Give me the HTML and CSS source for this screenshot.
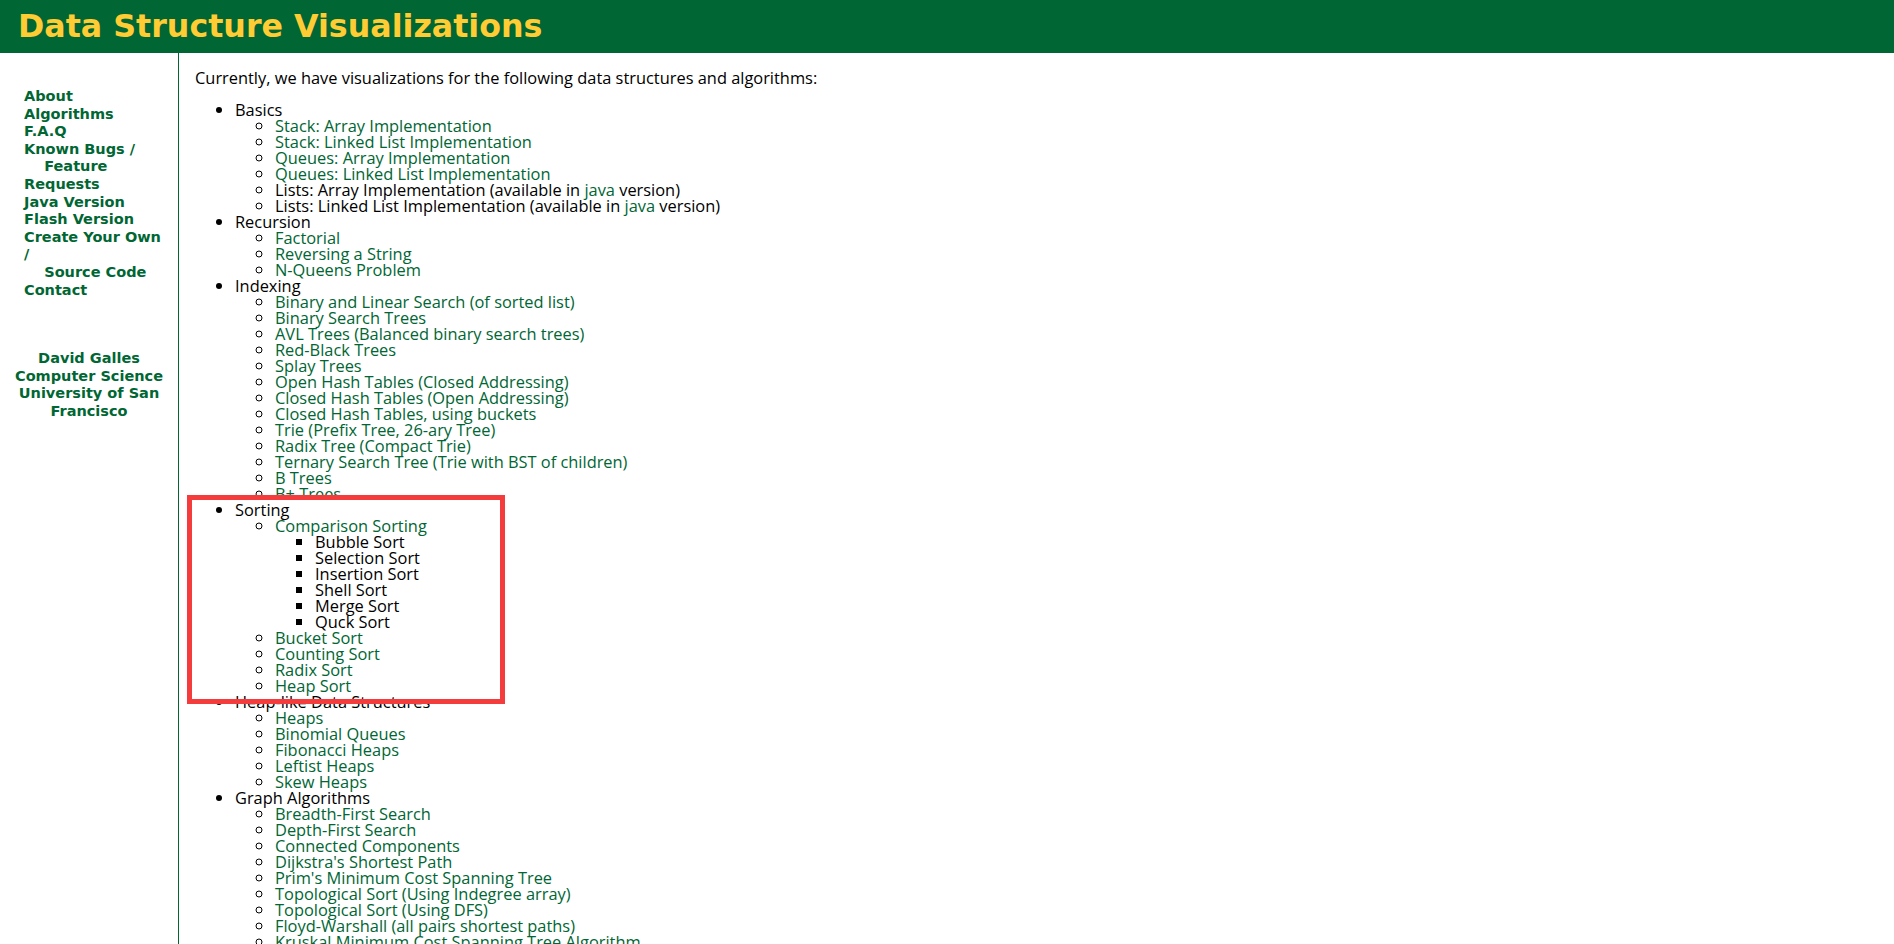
FILE: index.html
```html
<!DOCTYPE html>
<html>
<head>
    <title>Data Structure Visualizations</title>
    <link rel="stylesheet" href="styles.css">
</head>
<body>
    <div class="banner">
        <h1>Data Structure Visualizations</h1>
    </div>

    <div class="page">
        <div class="sidebar">
            <div class="nav-links">
                <a href="#">About</a><br>
                <a href="#">Algorithms</a><br>
                <a href="#">F.A.Q</a><br>
                <a href="#">Known Bugs /<br>&nbsp;&nbsp;&nbsp;&nbsp;Feature Requests</a><br>
                <a href="#">Java Version</a><br>
                <a href="#">Flash Version</a><br>
                <a href="#">Create Your Own /<br>&nbsp;&nbsp;&nbsp;&nbsp;Source Code</a><br>
                <a href="#">Contact</a>
            </div>
            <div class="author">
                <a href="#">David Galles</a><br>
                <a href="#">Computer Science</a><br>
                <a href="#">University of San Francisco</a>
            </div>
        </div>

        <div class="content">
            <p>Currently, we have visualizations for the following data structures and algorithms:</p>
            <ul class="topics">
                <li>Basics
                    <ul>
                        <li><a href="#">Stack: Array Implementation</a></li>
                        <li><a href="#">Stack: Linked List Implementation</a></li>
                        <li><a href="#">Queues: Array Implementation</a></li>
                        <li><a href="#">Queues: Linked List Implementation</a></li>
                        <li>Lists: Array Implementation (available in <a href="#">java</a> version)</li>
                        <li>Lists: Linked List Implementation (available in <a href="#">java</a> version)</li>
                    </ul>
                </li>
                <li>Recursion
                    <ul>
                        <li><a href="#">Factorial</a></li>
                        <li><a href="#">Reversing a String</a></li>
                        <li><a href="#">N-Queens Problem</a></li>
                    </ul>
                </li>
                <li>Indexing
                    <ul>
                        <li><a href="#">Binary and Linear Search (of sorted list)</a></li>
                        <li><a href="#">Binary Search Trees</a></li>
                        <li><a href="#">AVL Trees (Balanced binary search trees)</a></li>
                        <li><a href="#">Red-Black Trees</a></li>
                        <li><a href="#">Splay Trees</a></li>
                        <li><a href="#">Open Hash Tables (Closed Addressing)</a></li>
                        <li><a href="#">Closed Hash Tables (Open Addressing)</a></li>
                        <li><a href="#">Closed Hash Tables, using buckets</a></li>
                        <li><a href="#">Trie (Prefix Tree, 26-ary Tree)</a></li>
                        <li><a href="#">Radix Tree (Compact Trie)</a></li>
                        <li><a href="#">Ternary Search Tree (Trie with BST of children)</a></li>
                        <li><a href="#">B Trees</a></li>
                        <li><a href="#">B+ Trees</a></li>
                    </ul>
                </li>
                <li class="marked">Sorting
                    <ul>
                        <li><a href="#">Comparison Sorting</a>
                            <ul>
                                <li>Bubble Sort</li>
                                <li>Selection Sort</li>
                                <li>Insertion Sort</li>
                                <li>Shell Sort</li>
                                <li>Merge Sort</li>
                                <li>Quck Sort</li>
                            </ul>
                        </li>
                        <li><a href="#">Bucket Sort</a></li>
                        <li><a href="#">Counting Sort</a></li>
                        <li><a href="#">Radix Sort</a></li>
                        <li><a href="#">Heap Sort</a></li>
                    </ul>
                    <div class="highlight"></div>
                </li>
                <li>Heap-like Data Structures
                    <ul>
                        <li><a href="#">Heaps</a></li>
                        <li><a href="#">Binomial Queues</a></li>
                        <li><a href="#">Fibonacci Heaps</a></li>
                        <li><a href="#">Leftist Heaps</a></li>
                        <li><a href="#">Skew Heaps</a></li>
                    </ul>
                </li>
                <li>Graph Algorithms
                    <ul>
                        <li><a href="#">Breadth-First Search</a></li>
                        <li><a href="#">Depth-First Search</a></li>
                        <li><a href="#">Connected Components</a></li>
                        <li><a href="#">Dijkstra's Shortest Path</a></li>
                        <li><a href="#">Prim's Minimum Cost Spanning Tree</a></li>
                        <li><a href="#">Topological Sort (Using Indegree array)</a></li>
                        <li><a href="#">Topological Sort (Using DFS)</a></li>
                        <li><a href="#">Floyd-Warshall (all pairs shortest paths)</a></li>
                        <li><a href="#">Kruskal Minimum Cost Spanning Tree Algorithm</a></li>
                    </ul>
                </li>
                <li>Dynamic Programming
                    <ul>
                        <li><a href="#">Calculating nth Fibonacci number</a></li>
                        <li><a href="#">Making Change</a></li>
                        <li><a href="#">Longest Common Subsequence</a></li>
                    </ul>
                </li>
            </ul>
        </div>
    </div>
</body>
</html>
```

FILE: styles.css
```css
body {
    margin: 0;
    overflow: hidden;
    font-family: "Open Sans", "Liberation Sans", sans-serif;
    font-size: 16.4px;
    line-height: 16px;
    color: #000;
}

a {
    color: #006633;
    text-decoration: none;
}

.banner {
    height: 53px;
    background-color: #006633;
    display: flex;
    align-items: center;
    padding-left: 18px;
}

.banner h1 {
    margin: 0;
    font-family: "DejaVu Sans", Verdana, sans-serif;
    font-size: 31.7px;
    font-weight: bold;
    color: #ffcc33;
    line-height: 1;
}

.page {
    display: flex;
}

.sidebar {
    width: 178px;
    flex: none;
    font-family: "DejaVu Sans", Verdana, sans-serif;
    font-size: 14.5px;
    font-weight: bold;
    line-height: 17.6px;
}

.nav-links {
    padding: 35px 14px 0 24px;
}

.author {
    margin-top: 51px;
    padding: 0 14px;
    text-align: center;
}

.content {
    flex: 1;
    border-left: 1px solid #006633;
    padding-left: 16px;
    min-height: 900px;
}

.content p {
    margin: 17px 0 16px;
}

.topics {
    margin: 0;
    padding-left: 40px;
}

.topics ul {
    margin: 0;
    padding-left: 40px;
}

.marked {
    position: relative;
}

.highlight {
    position: absolute;
    left: -48px;
    top: -7px;
    width: 308px;
    height: 199px;
    border: 5px solid #f43c3c;
    pointer-events: none;
}
```
